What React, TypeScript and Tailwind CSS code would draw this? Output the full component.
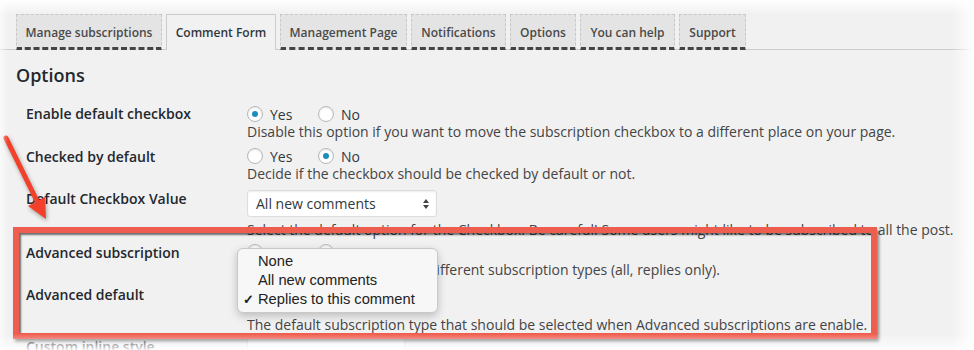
import React from 'react';

const tabs = [
  { label: 'Manage subscriptions', w: 'w-[146px]' },
  { label: 'Comment Form', w: 'w-[110px]', active: true },
  { label: 'Management Page', w: 'w-[127px]' },
  { label: 'Notifications', w: 'w-[95px]' },
  { label: 'Options', w: 'w-[66px]' },
  { label: 'You can help', w: 'w-[95px]' },
  { label: 'Support', w: 'w-[67px]' },
];

function Radio({ checked, label, wide }: { checked?: boolean; label: string; wide?: boolean }) {
  return (
    <span className={`flex items-center ${wide ? 'w-[71px]' : ''}`}>
      <span className="w-4 h-4 rounded-full border border-[#b4b9be] bg-white shadow-[inset_0_1px_2px_rgba(0,0,0,0.1)] flex items-center justify-center">
        {checked && <span className="w-[6px] h-[6px] rounded-full bg-[#1e8cbe]" />}
      </span>
      <span className="ml-[7px] text-[#32373c]">{label}</span>
    </span>
  );
}

function SelectBox({ value }: { value: string }) {
  return (
    <div className="w-[190px] h-[27px] bg-white border border-[#ddd] rounded-[3px] shadow-[inset_0_1px_2px_rgba(0,0,0,0.07)] flex items-center justify-between pl-2 pr-[6px] text-[#32373c]">
      <span>{value}</span>
      <svg width="8" height="12" viewBox="0 0 8 12">
        <path d="M4 1 L7 5 L1 5 Z" fill="#444" />
        <path d="M4 11 L7 7 L1 7 Z" fill="#444" />
      </svg>
    </div>
  );
}

function Row({ label, h, labelMt, children }: { label: string; h: string; labelMt: string; children: React.ReactNode }) {
  return (
    <div className={`flex ${h}`}>
      <div className={`w-[231px] pl-[10px] font-semibold text-[#23282d] leading-5 ${labelMt}`}>{label}</div>
      <div className="flex flex-col">{children}</div>
    </div>
  );
}

export default function App() {
  return (
    <div className="relative w-[974px] h-[350px] overflow-hidden bg-[#f1f1f1] font-['Open_Sans',sans-serif] text-[14px]">
      {/* Tabs */}
      <div className="flex items-end gap-[4px] border-b border-[#ccc] pl-4 pt-[14px]">
        {tabs.map((t) =>
          t.active ? (
            <div
              key={t.label}
              className={`${t.w} h-[36px] -mb-px flex items-center justify-center border border-b-0 border-[#ccc] bg-[#f1f1f1] text-[12px] font-semibold text-[#32373c] pt-[1px]`}
            >
              {t.label}
            </div>
          ) : (
            <div
              key={t.label}
              className={`${t.w} h-[36px] -mb-px flex items-center justify-center border border-dashed border-[#c8c8c8] border-b-[3px] border-b-[#444] bg-[#e4e4e4] text-[12px] font-semibold text-[#4a4a4a] pt-[3px]`}
            >
              {t.label}
            </div>
          )
        )}
      </div>

      <div className="pl-4">
        <h2 className="mt-[13px] text-[18px] leading-6 font-semibold text-[#23282d]">Options</h2>

        <div className="mt-[17px] flex flex-col">
          <Row label="Enable default checkbox" h="h-[42px]" labelMt="mt-0">
            <div className="flex h-5 items-center">
              <Radio checked label="Yes" wide />
              <Radio label="No" />
            </div>
            <div className="leading-[17px] -mt-px text-[#444]">
              Disable this option if you want to move the subscription checkbox to a different place on your page.
            </div>
          </Row>

          <Row label="Checked by default" h="h-[44px]" labelMt="mt-px">
            <div className="flex h-5 items-center">
              <Radio label="Yes" wide />
              <Radio checked label="No" />
            </div>
            <div className="leading-[17px] -mt-px text-[#444]">
              Decide if the checkbox should be checked by default or not.
            </div>
          </Row>

          <Row label="Default Checkbox Value" h="h-[52px]" labelMt="-mt-px">
            <SelectBox value="All new comments" />
            <div className="leading-[17px] mt-[4px] text-[#444] whitespace-nowrap">
              Select the default option for the Checkbox. Be careful! Some users might like to be subscribed to all the post.
            </div>
          </Row>

          <Row label="Advanced subscription" h="h-[42px]" labelMt="mt-px">
            <div className="flex h-5 items-center">
              <Radio label="Yes" wide />
              <Radio checked label="No" />
            </div>
            <div className="leading-[17px] -mt-px text-[#444]">
              Allow users to choose from different subscription types (all, replies only).
            </div>
          </Row>

          <Row label="Advanced default" h="h-[52px]" labelMt="mt-px">
            <SelectBox value="Replies to this comment" />
            <div className="leading-[17px] mt-[5px] text-[#444]">
              The default subscription type that should be selected when Advanced subscriptions are enable.
            </div>
          </Row>

          <Row label="Custom inline style" h="h-[40px]" labelMt="mt-[1px]">
            <div className="mt-[2px] w-[158px] h-[28px] bg-white border border-[#ddd]" />
          </Row>
        </div>
      </div>

      {/* Native select popup */}
      <div className="absolute left-[237px] top-[248px] w-[201px] h-[65px] rounded-[6px] bg-[#f7f7f7] border border-[#c9c9c9] shadow-[0_3px_8px_rgba(0,0,0,0.22)] pt-[3px] font-['Liberation_Sans',Arial,sans-serif] text-[14.7px] leading-[19px] text-[#222]">
        <div className="pl-[20px]">None</div>
        <div className="pl-[20px]">All new comments</div>
        <div className="relative pl-[20px]">
          <span className="absolute left-[5px] top-0 text-[13px] font-bold">✓</span>
          Replies to this comment
        </div>
      </div>

      {/* Annotation box */}
      <div className="absolute left-[13px] top-[227px] w-[864px] h-[112px] border-[6px] border-[#ee5e50] shadow-[2px_3px_3px_rgba(0,0,0,0.45),inset_2px_2px_2px_rgba(0,0,0,0.55)] pointer-events-none" />

      {/* Annotation arrow */}
      <svg className="absolute left-0 top-0 pointer-events-none drop-shadow-[1px_2px_2px_rgba(0,0,0,0.35)]" width="60" height="230" viewBox="0 0 60 230">
        <line x1="6" y1="138" x2="38" y2="203" stroke="#f2402b" strokeWidth="5" strokeLinecap="round" />
        <polygon points="46,219 45,197 28,206" fill="#f2402b" />
      </svg>

      {/* Screenshot edge fades */}
      <div className="absolute top-0 left-0 right-0 h-[14px] bg-gradient-to-b from-white to-transparent pointer-events-none" />
      <div className="absolute top-0 right-0 bottom-0 w-[22px] bg-gradient-to-l from-white to-transparent pointer-events-none" />
      <div className="absolute left-0 right-0 bottom-0 h-[16px] bg-gradient-to-t from-white/90 to-transparent pointer-events-none" />
      <div className="absolute top-0 left-0 bottom-0 w-[8px] bg-gradient-to-r from-white/60 to-transparent pointer-events-none" />
    </div>
  );
}
